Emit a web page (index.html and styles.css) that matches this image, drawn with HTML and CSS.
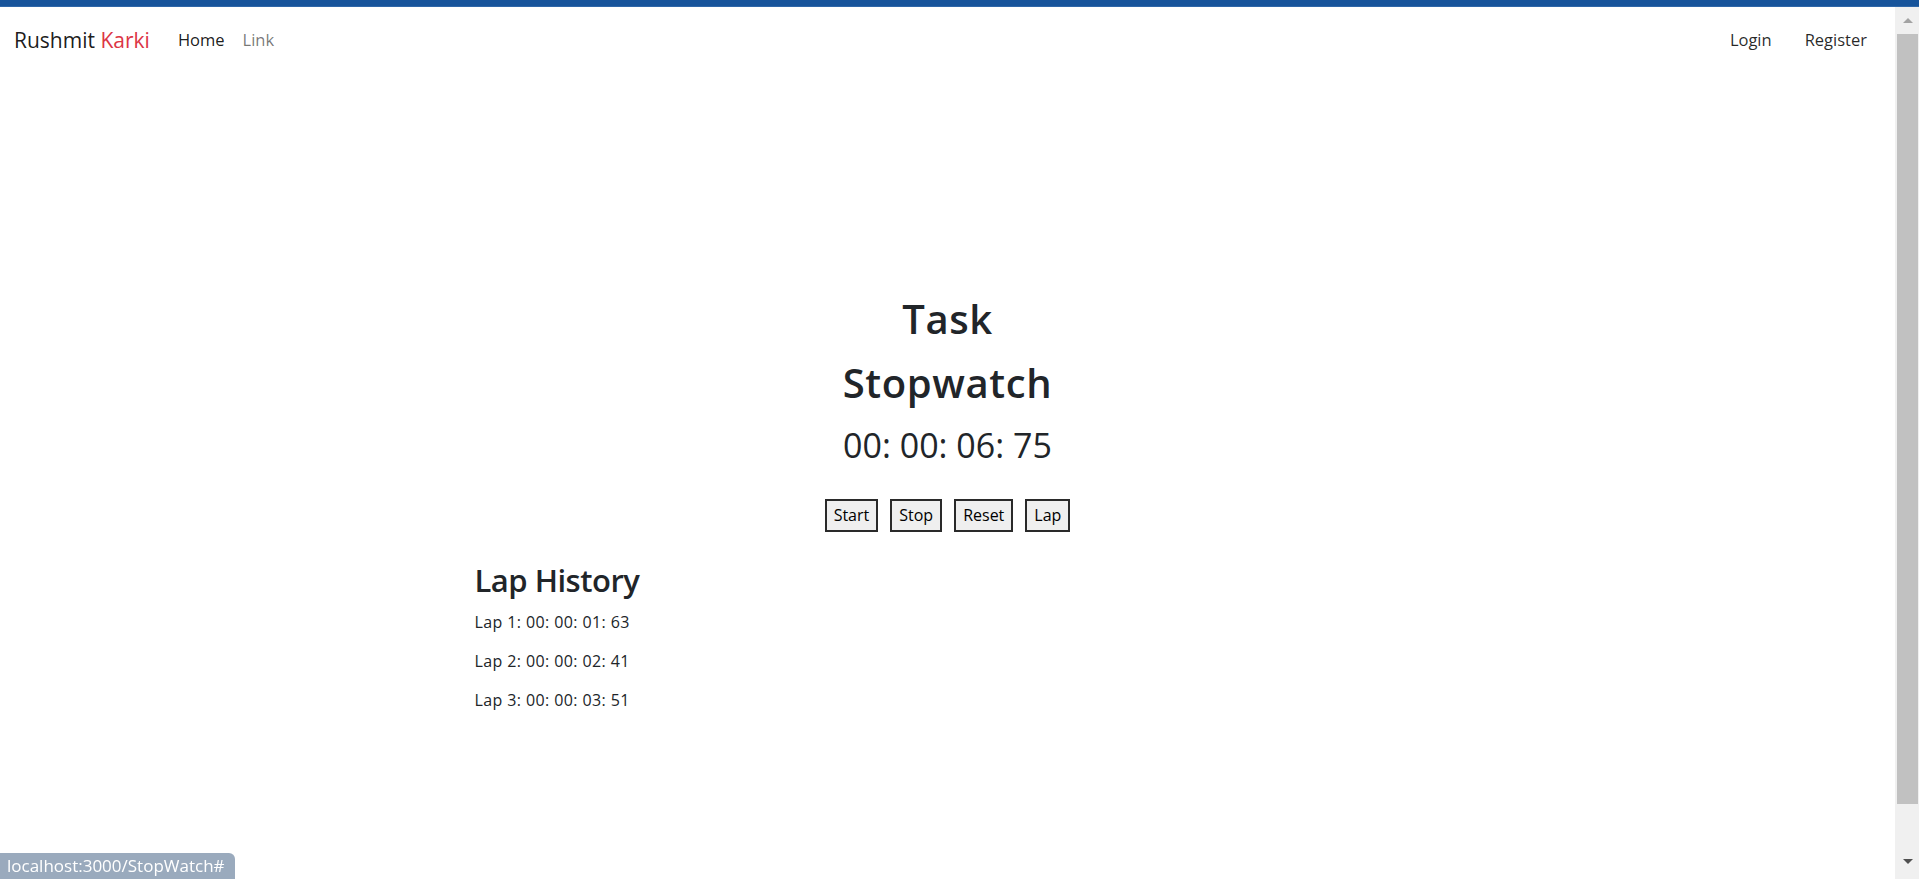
FILE: index.html
```html
<!DOCTYPE html>
<html lang="en">
<head>
<meta charset="utf-8">
<title>StopWatch</title>
<link rel="stylesheet" href="styles.css">
</head>
<body>
  <div class="topbar"></div>
  <div class="window">
    <div class="page">
      <nav class="navbar">
        <div class="nav-left">
          <a class="brand" href="#">Rushmit <span class="brand-accent">Karki</span></a>
          <ul class="nav-links">
            <li><a class="nav-link active" href="#">Home</a></li>
            <li><a class="nav-link" href="#">Link</a></li>
          </ul>
        </div>
        <ul class="nav-links nav-right">
          <li><a class="nav-link dark" href="#">Login</a></li>
          <li><a class="nav-link dark" href="#">Register</a></li>
        </ul>
      </nav>
      <main class="content">
        <section class="stopwatch">
          <h1 class="title">Task<br>Stopwatch</h1>
          <div class="time">00: 00: 06: 75</div>
          <div class="controls">
            <button class="btn">Start</button>
            <button class="btn">Stop</button>
            <button class="btn">Reset</button>
            <button class="btn">Lap</button>
          </div>
        </section>
        <section class="laps">
          <h2 class="laps-title">Lap History</h2>
          <p class="lap">Lap 1: 00: 00: 01: 63</p>
          <p class="lap">Lap 2: 00: 00: 02: 41</p>
          <p class="lap">Lap 3: 00: 00: 03: 51</p>
        </section>
      </main>
    </div>
    <div class="scrollbar">
      <div class="arrow arrow-up"></div>
      <div class="thumb"></div>
      <div class="arrow arrow-down"></div>
    </div>
  </div>
  <div class="status">localhost:3000/StopWatch#</div>
</body>
</html>
```
FILE: styles.css
```css
* { box-sizing: border-box; }

html, body {
  margin: 0;
  padding: 0;
  height: 100%;
  overflow: hidden;
}

body {
  font-family: "Open Sans", "Noto Sans", sans-serif;
  font-size: 16px;
  color: #212529;
  background: #fff;
  display: flex;
  flex-direction: column;
}

.topbar {
  height: 7px;
  background: #17549b;
  border-bottom: 1px solid #2f67a8;
  flex: none;
}

.window {
  flex: 1;
  display: flex;
  min-height: 0;
}

.page {
  flex: 1;
  min-width: 0;
}

/* Navbar */
.navbar {
  height: 66px;
  display: flex;
  align-items: center;
  justify-content: space-between;
  padding: 0 12px 0 12px;
}

.nav-left {
  display: flex;
  align-items: center;
}

.brand {
  font-size: 21px;
  color: rgba(0, 0, 0, 0.9);
  text-decoration: none;
  margin-left: 2px;
  margin-right: 19px;
}

.brand-accent { color: #dc3545; }

.nav-links {
  list-style: none;
  margin: 0;
  padding: 0;
  display: flex;
}

.nav-link {
  display: block;
  padding: 0 9px;
  line-height: 24px;
  font-size: 16.5px;
  color: rgba(0, 0, 0, 0.55);
  text-decoration: none;
}

.nav-link.active { color: rgba(0, 0, 0, 0.9); }

.nav-right .nav-link { padding: 0 16px; }
.nav-right li:first-child .nav-link { padding-right: 17px; }
.nav-link.dark { color: rgba(0, 0, 0, 0.85); }

/* Content */
.content {
  padding-top: 214px;
}

.stopwatch {
  text-align: center;
}

.title {
  margin: 0;
  font-size: 40px;
  line-height: 64px;
  font-weight: 600;
  letter-spacing: 0.6px;
}

.time {
  margin-top: 10px;
  font-size: 34px;
  line-height: 41px;
}

.controls {
  margin-top: 33px;
  display: flex;
  justify-content: center;
  gap: 12px;
}

.btn {
  font-family: "Open Sans", "Noto Sans", sans-serif;
  font-size: 16px;
  line-height: 25px;
  height: 33px;
  padding: 2px 7px;
  color: #000;
  background: #efefef;
  border: 2px solid #2a2a2a;
  border-radius: 0;
}

.laps {
  max-width: 946px;
  margin: 29px auto 0;
}

.laps-title {
  margin: 0 0 11px;
  font-size: 31px;
  line-height: 38px;
  font-weight: 600;
  letter-spacing: -0.5px;
}

.lap {
  margin: 0 0 15px;
  font-size: 16px;
  line-height: 24px;
  letter-spacing: 0.4px;
}

/* Scrollbar */
.scrollbar {
  width: 24px;
  flex: none;
  background: #f0f0f0;
  display: flex;
  flex-direction: column;
  align-items: center;
  padding: 0 1px 0 2px;
}

.arrow {
  width: 0;
  height: 0;
  border-left: 5px solid transparent;
  border-right: 5px solid transparent;
}

.arrow-up {
  margin-top: 11px;
  border-bottom: 5px solid #a3a3a3;
}

.arrow-down {
  margin-top: auto;
  margin-bottom: 15px;
  border-top: 5px solid #505050;
}

.thumb {
  margin-top: 11px;
  width: 21px;
  height: 770px;
  background: #c1c1c1;
}

/* Status overlay */
.status {
  position: fixed;
  left: 0;
  bottom: 0;
  height: 26px;
  padding: 0 10px 0 7px;
  background: #9aaabd;
  color: #fff;
  font-size: 17px;
  line-height: 26px;
  border-top-right-radius: 6px;
}
```
